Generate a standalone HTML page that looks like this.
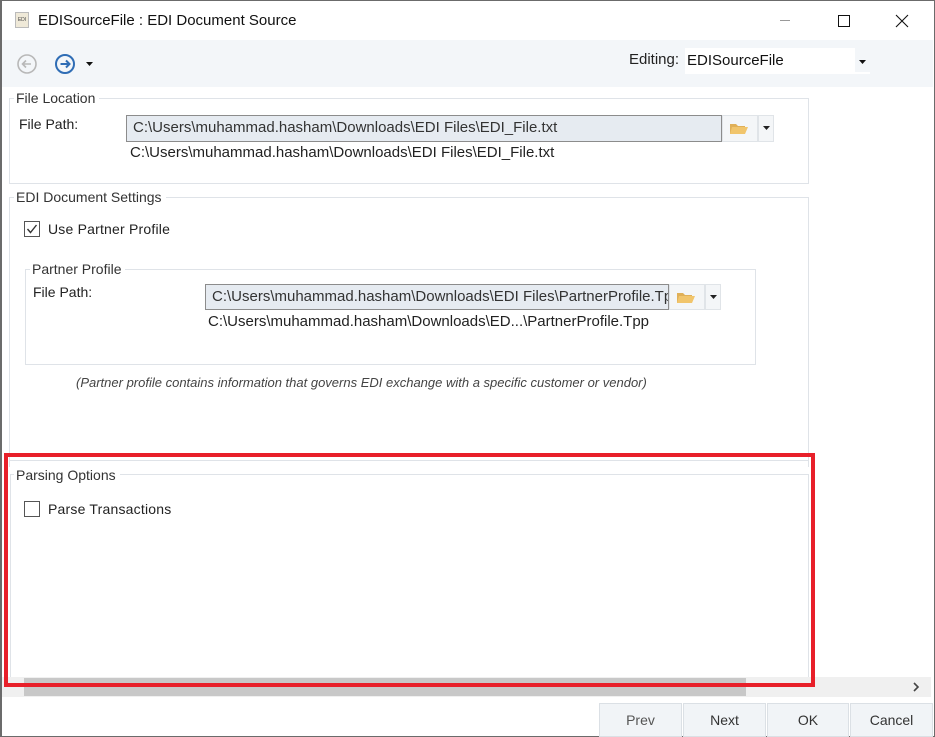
<!DOCTYPE html>
<html><head><style>
*{margin:0;padding:0;box-sizing:border-box}
body{width:935px;height:737px;overflow:hidden;background:#fff;font-family:"Liberation Sans",sans-serif;font-size:14px;color:#222;position:relative}
.a{position:absolute}
.win{left:0;top:0;width:935px;height:737px;border:1px solid #6b6b6b;border-left:2px solid #6b6b6b}
.grp{position:absolute;border:1px solid #dfe3e8}
.lbl{position:absolute;background:#fff;padding:0 4px 0 2px;font-size:14px;color:#333;line-height:16px}
.t{position:absolute;font-size:14px;line-height:16px;white-space:nowrap;color:#222}
.tb{position:absolute;background:#e6ebf1;border:1px solid #8c8c8c;font-size:15px;line-height:24px;padding-left:6px;white-space:nowrap;overflow:hidden;color:#333}
.btnf{position:absolute;background:#f4f6f8;border:1px solid #e0e4e8}
.cb{position:absolute;width:16px;height:16px;border:1px solid #555;background:#fff}
.bt{position:absolute;top:703px;height:34px;background:#f1f4f7;border:1px solid #dbe0e5;font-size:14px;line-height:32px;text-align:center;color:#333}
</style></head><body>
<div class="a win"></div>
<div class="a" style="left:15px;top:12px;width:14px;height:16px;background:#efe9d8;border:1px solid #bbb;font-size:5px;line-height:14px;text-align:center;color:#444">EDI</div>
<div class="t" style="left:38px;top:12px;font-size:15px;line-height:17px;color:#111">EDISourceFile : EDI Document Source</div>
<div class="a" style="left:780px;top:20px;width:10px;height:1px;background:#999"></div>
<div class="a" style="left:838px;top:15px;width:12px;height:12px;border:1px solid #111"></div>
<svg class="a" style="left:895px;top:14px" width="14" height="14"><path d="M1 1L13 13M13 1L1 13" stroke="#111" stroke-width="1.1"/></svg>
<div class="a" style="left:2px;top:40px;width:931px;height:47px;background:#f3f6f9"></div>
<svg class="a" style="left:16px;top:53px" width="22" height="22"><circle cx="11" cy="11" r="9" fill="none" stroke="#b8b8b8" stroke-width="1.6"/><path d="M15 11H7M10 7.5L6.5 11L10 14.5" fill="none" stroke="#b8b8b8" stroke-width="1.6"/></svg>
<svg class="a" style="left:54px;top:53px" width="22" height="22"><circle cx="11" cy="11" r="9" fill="none" stroke="#2f6db5" stroke-width="2"/><path d="M6.5 11H15M12 7.5L15.5 11L12 14.5" fill="none" stroke="#2f6db5" stroke-width="2"/></svg>
<svg class="a" style="left:86px;top:62px" width="7" height="5"><path d="M0 0H7L3.5 4Z" fill="#111"/></svg>
<div class="t" style="left:629px;top:52px;font-size:15px;color:#222">Editing:</div>
<div class="a" style="left:685px;top:48px;width:185px;height:26px;background:#fff"></div>
<div class="t" style="left:687px;top:53px;font-size:15px;color:#111">EDISourceFile</div>
<div class="a" style="left:855px;top:48px;width:15px;height:24px;background:#f3f6f9"></div>
<svg class="a" style="left:859px;top:60px" width="7" height="5"><path d="M0 0H7L3.5 4Z" fill="#111"/></svg>
<div class="grp" style="left:9px;top:98px;width:800px;height:86px"></div>
<div class="lbl" style="left:14px;top:90px">File Location</div>
<div class="t" style="left:19px;top:116px">File Path:</div>
<div class="tb" style="left:126px;top:115px;width:596px;height:27px">C:\Users\muhammad.hasham\Downloads\EDI Files\EDI_File.txt</div>
<div class="btnf" style="left:722px;top:115px;width:36px;height:27px"></div>
<svg class="a" style="left:729px;top:121px" width="20" height="14"><path d="M1 3H7L9 5H16V13H1Z" fill="#e0b058"/><path d="M3 6H19L16 13H1Z" fill="#f1c56c"/></svg>
<div class="btnf" style="left:758px;top:115px;width:16px;height:27px"></div>
<svg class="a" style="left:763px;top:126px" width="7" height="5"><path d="M0 0H7L3.5 4Z" fill="#222"/></svg>
<div class="t" style="left:130px;top:145px;font-size:15px">C:\Users\muhammad.hasham\Downloads\EDI Files\EDI_File.txt</div>
<div class="grp" style="left:9px;top:197px;width:800px;height:270px;border-bottom:none"></div>
<div class="lbl" style="left:14px;top:189px">EDI Document Settings</div>
<div class="cb" style="left:24px;top:221px"></div>
<svg class="a" style="left:26px;top:223px" width="12" height="12"><path d="M1.5 6L4.5 9.5L10.5 2" fill="none" stroke="#333" stroke-width="1.4"/></svg>
<div class="t" style="left:48px;top:221px;letter-spacing:0.2px">Use Partner Profile</div>
<div class="grp" style="left:25px;top:269px;width:731px;height:96px"></div>
<div class="lbl" style="left:30px;top:261px">Partner Profile</div>
<div class="t" style="left:33px;top:284px">File Path:</div>
<div class="tb" style="left:205px;top:284px;width:464px;height:26px">C:\Users\muhammad.hasham\Downloads\EDI Files\PartnerProfile.Tpp</div>
<div class="btnf" style="left:669px;top:284px;width:36px;height:26px"></div>
<svg class="a" style="left:676px;top:290px" width="20" height="14"><path d="M1 3H7L9 5H16V13H1Z" fill="#e0b058"/><path d="M3 6H19L16 13H1Z" fill="#f1c56c"/></svg>
<div class="btnf" style="left:705px;top:284px;width:16px;height:26px"></div>
<svg class="a" style="left:710px;top:295px" width="7" height="5"><path d="M0 0H7L3.5 4Z" fill="#222"/></svg>
<div class="t" style="left:208px;top:314px;font-size:15px">C:\Users\muhammad.hasham\Downloads\ED...\PartnerProfile.Tpp</div>
<div class="t" style="left:76px;top:375px;font-size:13px;font-style:italic;color:#444">(Partner profile contains information that governs EDI exchange with a specific customer or vendor)</div>
<div class="a" style="left:9px;top:460px;width:800px;height:1px;background:#dfe3e8"></div>
<div class="grp" style="left:10px;top:474px;width:799px;height:205px;border-bottom:none"></div>
<div class="lbl" style="left:14px;top:467px">Parsing Options</div>
<div class="cb" style="left:24px;top:501px"></div>
<div class="t" style="left:48px;top:501px;letter-spacing:0.2px">Parse Transactions</div>
<div class="a" style="left:2px;top:677px;width:929px;height:20px;background:#f0f0f0"></div>
<div class="a" style="left:24px;top:678px;width:722px;height:18px;background:#c8c8c8"></div>
<svg class="a" style="left:912px;top:682px" width="8" height="10"><path d="M2 1L6 5L2 9" fill="none" stroke="#444" stroke-width="1.6"/></svg>
<div class="a" style="left:4px;top:453px;width:811px;height:234px;border:4px solid #e8202a"></div>
<div class="bt" style="left:599px;width:83px;color:#555">Prev</div>
<div class="bt" style="left:683px;width:83px">Next</div>
<div class="bt" style="left:767px;width:82px">OK</div>
<div class="bt" style="left:850px;width:83px">Cancel</div>
</body></html>
